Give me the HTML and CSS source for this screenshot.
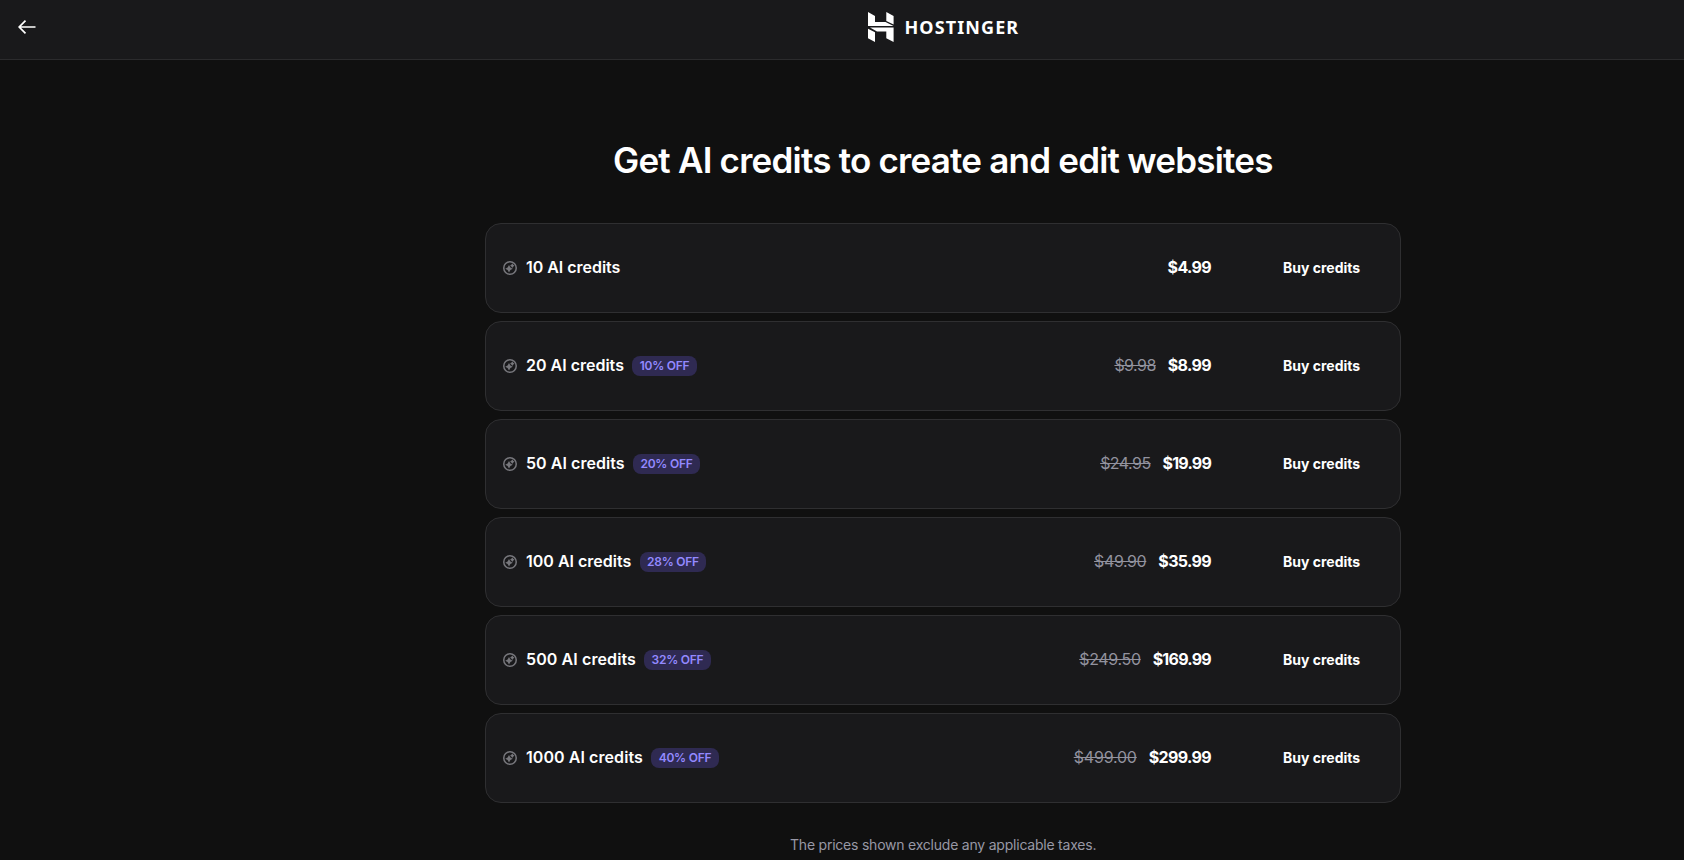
FILE: index.html
```
<!DOCTYPE html>
<html lang="en">
<head>
<meta charset="utf-8">
<title>AI credits</title>
<link rel="stylesheet" href="styles.css">
</head>
<body>
<svg class="defs" aria-hidden="true">
  <symbol id="credit" viewBox="0 0 14 14">
    <circle cx="7" cy="7" r="6.25" fill="none" stroke="currentColor" stroke-width="1.5"/>
    <path fill="currentColor" d="M6 4 7.4 6.5 9.8 7.8 7.4 9.1 6 11.6 4.6 9.1 2.2 7.8 4.6 6.5ZM9.3 2.4 10.3 3.8 11.6 4.7 10.3 5.6 9.3 7 8.3 5.6 7 4.7 8.3 3.8Z"/>
  </symbol>
</svg>
<header class="header">
  <a class="back" aria-label="Back"><svg width="18" height="14" viewBox="0 0 18 14"><path d="M17.5 7H1.3M7.5 .7 1.2 7l6.3 6.3" fill="none" stroke="currentColor" stroke-width="1.7"/></svg></a>
  <div class="brand">
    <svg width="26" height="30" viewBox="0 0 26 30"><path fill="#fff" d="M0 0 7 4V10H17.5L25.6 14H0ZM18.3 0 25.6 4V12.6L18.3 9ZM2 15.6H25.6V30L18.3 26.2V19.6H9ZM0 16.8 7 20.3V30L0 26.2Z"/></svg>
    <span class="wordmark">HOSTINGER</span>
  </div>
</header>
<main class="main">
  <h1 class="title">Get AI credits to create and edit websites</h1>
  <ul class="plans">
    <li class="plan"><svg class="icon"><use href="#credit"/></svg><span class="name n10">10 AI credits</span><span class="price p4">$4.99</span><button class="buy">Buy credits</button></li>
    <li class="plan"><svg class="icon"><use href="#credit"/></svg><span class="name n20">20 AI credits</span><span class="badge b10">10% OFF</span><s class="old o9">$9.98</s><span class="price p8">$8.99</span><button class="buy">Buy credits</button></li>
    <li class="plan"><svg class="icon"><use href="#credit"/></svg><span class="name n50">50 AI credits</span><span class="badge b20">20% OFF</span><s class="old o24">$24.95</s><span class="price p19">$19.99</span><button class="buy">Buy credits</button></li>
    <li class="plan"><svg class="icon"><use href="#credit"/></svg><span class="name n100">100 AI credits</span><span class="badge b28">28% OFF</span><s class="old o49">$49.90</s><span class="price p35">$35.99</span><button class="buy">Buy credits</button></li>
    <li class="plan"><svg class="icon"><use href="#credit"/></svg><span class="name n500">500 AI credits</span><span class="badge b32">32% OFF</span><s class="old o249">$249.50</s><span class="price p169">$169.99</span><button class="buy">Buy credits</button></li>
    <li class="plan"><svg class="icon"><use href="#credit"/></svg><span class="name n1000">1000 AI credits</span><span class="badge b40">40% OFF</span><s class="old o499">$499.00</s><span class="price p299">$299.99</span><button class="buy">Buy credits</button></li>
  </ul>
  <p class="note">The prices shown exclude any applicable taxes.</p>
</main>
</body>
</html>
```
FILE: styles.css
```
* { box-sizing: border-box; }
body { margin: 0; height: 860px; overflow: hidden; background: #101010; color: #fff; font-family: Inter, sans-serif; font-size: 16px; }
.defs { display: none; }
.header { height: 60px; display: flex; align-items: flex-start; background: #19191b; border-bottom: 1px solid #2b2b2d; }
.back { width: 202px; padding: 20px 0 0 18px; line-height: 0; }
.back svg { display: block; }
.brand { flex: 1; display: flex; justify-content: center; align-items: center; gap: 11px; padding-top: 12px; height: 42px; }
.brand svg { display: block; }
.wordmark { width: 114px; font: 700 18px/30px "Noto Sans", sans-serif; letter-spacing: 1.1px; white-space: nowrap; }
.main { padding-left: 202px; display: flex; flex-direction: column; align-items: center; }
.title { margin: 76px 0 39px; width: 660px; font-size: 35px; line-height: 48px; font-weight: 600; letter-spacing: -.78px; white-space: nowrap; }
.plans { list-style: none; margin: 0; padding: 0; width: 916px; display: grid; gap: 8px; }
.plan { height: 90px; border: 1px solid #2f2f31; border-radius: 16px; background: #19191b; padding: 0 40px 0 17px; display: flex; align-items: center; white-space: nowrap; }
.icon { width: 14px; height: 14px; margin-right: 9px; color: #77777c; flex: none; }
.name { font-weight: 600; line-height: 24px; padding-bottom: 2px; letter-spacing: 0; margin-right: 8px; flex: none; }
.n10 { width: 96px; letter-spacing: -.03px; } .n20 { width: 98px; } .n50 { width: 99px; letter-spacing: .05px; } .n100 { width: 106px; } .n500 { width: 110px; letter-spacing: .1px; } .n1000 { width: 117px; letter-spacing: .07px; }
.badge { height: 20px; border-radius: 8px; background: #2f2a52; color: #9389ff; font-size: 12px; line-height: 20px; font-weight: 600; letter-spacing: -.25px; text-align: center; flex: none; }
.b10 { width: 65px; } .b20, .b32 { width: 67px; } .b28 { width: 66px; } .b40 { width: 68px; }
.old { margin-left: auto; margin-right: 12px; padding-bottom: 2px; color: #92929e; letter-spacing: -.55px; }
.o49 { letter-spacing: -.4px; } .o249 { letter-spacing: -.35px; } .o499 { letter-spacing: -.2px; }
.price { font-weight: 700; letter-spacing: -.65px; padding-bottom: 2px; }
.p19 { letter-spacing: -.8px; } .p169 { letter-spacing: -.75px; }
.n10 + .price { margin-left: auto; }
.buy { width: 77px; margin-left: 72px; padding: 0; border: 0; background: none; color: inherit; font: 700 14px/20px Inter, sans-serif; letter-spacing: 0; text-align: left; }
.note { margin: 31px 0 0; font-size: 14px; line-height: 22px; color: #9898a5; letter-spacing: -.22px; width: 306px; white-space: nowrap; }
```
